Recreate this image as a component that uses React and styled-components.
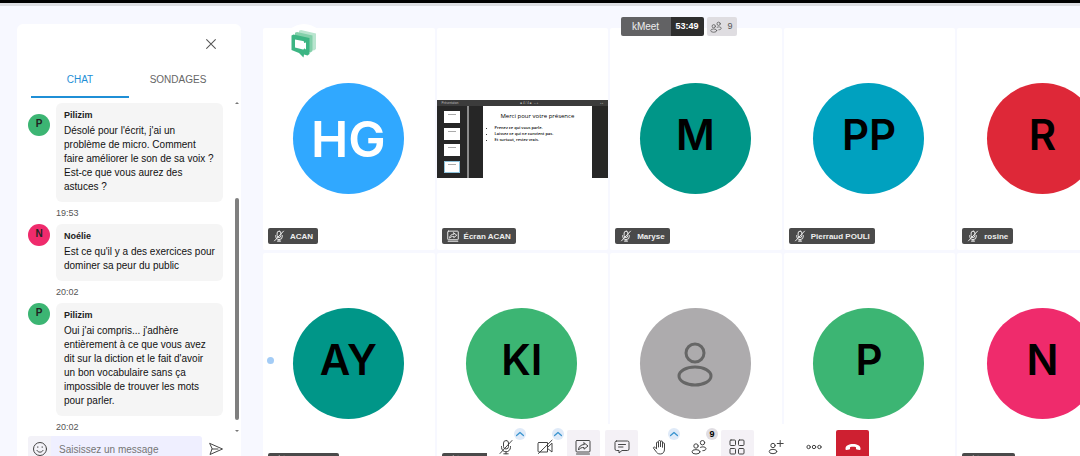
import React, { Component } from 'react';
import styled, { createGlobalStyle } from 'styled-components';

const messages = [
    { initial: 'P', color: '#3cb573', author: 'Pilizim', time: '19:53', text: "Désolé pour l'écrit, j'ai un problème de micro. Comment faire améliorer le son de sa voix ? Est-ce que vous aurez des astuces ?" },
    { initial: 'N', color: '#ef2b6c', author: 'Noélie', time: '20:02', text: "Est ce qu'il y a des exercices pour dominer sa peur du public" },
    { initial: 'P', color: '#3cb573', author: 'Pilizim', time: '20:02', text: "Oui j'ai compris... j'adhère entièrement à ce que vous avez dit sur la diction et le fait d'avoir un bon vocabulaire sans ça impossible de trouver les mots pour parler." }
];

const participants = [
    { initials: 'HG', color: '#30a8ff', name: 'ACAN', host: true },
    { name: 'Écran ACAN', screen: true },
    { initials: 'M', color: '#009688', name: 'Maryse' },
    { initials: 'PP', color: '#00a1bf', name: 'Pierraud POULI' },
    { initials: 'R', color: '#de2838', name: 'rosine' },
    { initials: 'AY', color: '#009688', tagWidth: 71, speaking: true },
    { initials: 'KI', color: '#3cb573', tagWidth: 71 },
    { color: '#adabad', tagWidth: 53 },
    { initials: 'P', color: '#3cb573', tagWidth: 53 },
    { initials: 'N', color: '#ef2b6c', tagWidth: 53 }
];

const Icon = ({ size = 16, width = 1, children }) => (
    <svg width={size} height={size} viewBox="0 0 16 16" fill="none" stroke="currentColor" strokeWidth={width} strokeLinecap="round" strokeLinejoin="round" aria-hidden="true">
        {children}
    </svg>
);

const MicOffIcon = ({ size, width }) => (
    <Icon size={size} width={width}>
        <rect x="5.5" y="1.5" width="5" height="8.5" rx="2.5"/>
        <path d="M3.5 7.5v.8a4.5 4.5 0 0 0 9 0v-.8M8 12.8v2M5.8 14.8h4.4M14 1.5 2 14.5"/>
    </Icon>
);

const CameraOffIcon = () => (
    <Icon>
        <path d="M2 3.5h8.5v9.500H2a1 1 0 0 1-1-1v-7.500a1 1 0 0 1 1-1zM10.500 8.500 15 4.200v8.800l-4-3.200M15 1.200 1.500 14.500"/>
    </Icon>
);

const ShareIcon = ({ size, width }) => (
    <Icon size={size} width={width}>
        <rect x="1" y="1.5" width="14" height="11.5" rx="1"/>
        <path d="M1.5 15h13M9 3.800 13 7 9 10.200V8.500C6.500 8.300 4.800 9.300 3.500 11 3.500 7.600 6 5.600 9 5.500z"/>
    </Icon>
);

const ChatIcon = () => (
    <Icon>
        <path d="M2.500 2h11A1.500 1.500 0 0 1 15 3.500v6.500a1.500 1.500 0 0 1-1.500 1.500H8L5 14v-2.500H2.500A1.500 1.500 0 0 1 1 10V3.500A1.500 1.500 0 0 1 2.500 2zM4.500 5.500h7M4.500 8h4.500"/>
    </Icon>
);

const HandIcon = () => (
    <Icon>
        <path d="M4.500 9.500V4a1 1 0 0 1 2 0v4M6.500 7.500V2.500a1 1 0 0 1 2 0v5M8.500 7.500V3a1 1 0 0 1 2 0v5M10.500 8V4.800a1 1 0 0 1 2 0V10c0 3-1.500 5-4.200 5-2.500 0-3.500-1.200-4.500-2.800L1.500 9.200c-.5-1 .8-1.600 1.600-.8l1.400 1.500"/>
    </Icon>
);

const PeopleIcon = ({ size }) => (
    <Icon size={size}>
        <circle cx="5" cy="7" r="2.200"/>
        <ellipse cx="5" cy="12.800" rx="4" ry="2.200"/>
        <circle cx="11.500" cy="3.700" r="2.200"/>
        <path d="M9.500 8.300c2-1 5.500-.5 5.500 1.400 0 1.200-1.400 2-3.200 2"/>
    </Icon>
);

const GridIcon = () => (
    <Icon>
        <rect x="1" y="1" width="5.500" height="5.500" rx="1"/>
        <rect x="9.500" y="1" width="5.500" height="5.500" rx="1"/>
        <rect x="1" y="9.500" width="5.500" height="5.500" rx="1"/>
        <rect x="9.500" y="9.500" width="5.500" height="5.500" rx="1"/>
    </Icon>
);

const AddPersonIcon = () => (
    <Icon>
        <circle cx="5" cy="6.500" r="2.200"/>
        <ellipse cx="5" cy="12.500" rx="3.800" ry="2.200"/>
        <path d="M12.200 1.500v6M9.200 4.500h6"/>
    </Icon>
);

const MoreIcon = () => (
    <Icon>
        <circle cx="2.600" cy="8" r="1.700"/>
        <circle cx="8" cy="8" r="1.700"/>
        <circle cx="13.400" cy="8" r="1.700"/>
    </Icon>
);

const HangUpIcon = () => (
    <Icon width={0}>
        <path fill="currentColor" d="M.5 9.500C.5 6.500 4 5 8 5s7.500 1.500 7.500 4.500v.7c0 .6-.4.900-1 .8l-2.700-.4c-.5-.1-.8-.4-.8-.9V8.300C9.200 7.700 6.800 7.700 5 8.300v1.400c0 .5-.3.800-.8.900L1.500 11c-.6.1-1-.2-1-.8z"/>
    </Icon>
);

const ChevronIcon = () => (
    <Icon size={10} width={2}><path d="M2.500 10.500 8 5.500l5.500 5"/></Icon>
);

const PersonIcon = () => (
    <svg width="36" height="48" viewBox="0 0 36 48" fill="none" stroke="#666" strokeWidth="3" aria-hidden="true">
        <circle cx="18" cy="13" r="9"/>
        <ellipse cx="18" cy="36" rx="16" ry="9"/>
    </svg>
);

const MeetLogo = () => (
    <svg width="26" height="28" viewBox="0 0 26 28" aria-hidden="true">
        <path fill="#b9e5cf" d="M8 .8 10 0l15 3.500v15.500l-2 1.500L8 17z"/>
        <path fill="#83d0aa" d="M4 2.800 6 2l15.500 3.500V21l-2 1.500L4 19z"/>
        <path fill="#3cb583" d="M.5 5.500 2.500 4.500 18.500 8V24l-2 1.500-3.500-1-.5 3-4.500-4.500L.500 20z"/>
        <path fill="#fff" d="M4 9.500l8 1.600c.6.100 1 .5 1 1v.8l2-.3v7l-2-1.300v.4c0 .5-.4.800-1 .7L4 17.500z"/>
    </svg>
);

const tools = [
    { label: 'Activer le micro', icon: <MicOffIcon/>, arrow: true },
    { label: 'Activer la caméra', icon: <CameraOffIcon/>, arrow: true },
    { label: "Partager l'écran", icon: <ShareIcon/>, active: true },
    { label: 'Chat', icon: <ChatIcon/>, active: true },
    { label: 'Lever la main', icon: <HandIcon/>, arrow: true },
    { label: 'Participants', icon: <PeopleIcon/>, count: 9 },
    { label: 'Mosaïque', icon: <GridIcon/>, active: true },
    { label: 'Inviter', icon: <AddPersonIcon/> },
    { label: 'Plus', icon: <MoreIcon/> },
    { label: 'Raccrocher', icon: <HangUpIcon/>, danger: true }
];

const SharedScreen = () => (
    <StyledScreen>
        <StyledScreenBar><span>Présentation</span><span>■ 4 / 4 ■ &nbsp; – +</span><span>▪ ▪</span></StyledScreenBar>
        <StyledScreenBody>
            <StyledSlideList>
                <StyledSlideThumb/>
                <StyledSlideThumb/>
                <StyledSlideThumb/>
                <StyledSlideThumb $selected/>
            </StyledSlideList>
            <StyledSlide>
                <StyledSlideTitle>Merci pour votre présence</StyledSlideTitle>
                <StyledSlideBullets>
                    <li>Prenez ce qui vous parle.</li>
                    <li>Laissez ce qui ne convient pas.</li>
                    <li>Et surtout, restez vrais.</li>
                </StyledSlideBullets>
            </StyledSlide>
        </StyledScreenBody>
    </StyledScreen>
);

const ChatMessage = ({ message }) => (
    <StyledMessage>
        <StyledSmallAvatar $color={message.color}>{message.initial}</StyledSmallAvatar>
        <StyledMessageContent>
            <StyledBubble>
                <StyledAuthor>{message.author}</StyledAuthor>
                <StyledMessageText>{message.text}</StyledMessageText>
            </StyledBubble>
            <StyledTime>{message.time}</StyledTime>
        </StyledMessageContent>
    </StyledMessage>
);

const ParticipantTile = ({ participant }) => (
    <StyledTile>
        {participant.screen
            ? <SharedScreen/>
            : <StyledAvatar $color={participant.color} $host={participant.host} $empty={!participant.initials}>
                {participant.initials || <PersonIcon/>}
            </StyledAvatar>}
        {participant.speaking && <StyledSpeakingDot/>}
        <StyledNameTag $width={participant.tagWidth}>
            {participant.screen ? <ShareIcon size={12} width={1.3}/> : <MicOffIcon size={12} width={1.3}/>}
            {participant.name}
        </StyledNameTag>
    </StyledTile>
);

class App extends Component {
    state = {
        tab: 'chat',
        draft: ''
    }

    selectTab = (tab) => {
        this.setState({ tab });
    }

    changeDraft = (e) => {
        this.setState({ draft: e.target.value });
    }

    render() {
        return (
            <StyledApp>
                <GlobalStyle/>
                <StyledTopEdge/>
                <StyledLayout>
                    <StyledSidebar>
                        <StyledCloseButton aria-label="Fermer">
                            <Icon size={14} width={1.2}><path d="M3 3l10 10M13 3 3 13"/></Icon>
                        </StyledCloseButton>
                        <StyledTabs>
                            <StyledTab $selected={this.state.tab === 'chat'} onClick={() => this.selectTab('chat')}>CHAT</StyledTab>
                            <StyledTab $selected={this.state.tab === 'polls'} onClick={() => this.selectTab('polls')}>SONDAGES</StyledTab>
                        </StyledTabs>
                        <StyledChatArea>
                            <StyledMessageList>
                                {messages.map((message, i) => <ChatMessage key={i} message={message}/>)}
                            </StyledMessageList>
                            <StyledScrollbar>
                                <StyledScrollArrow/>
                                <StyledScrollThumb/>
                                <StyledScrollArrow $down/>
                            </StyledScrollbar>
                        </StyledChatArea>
                        <StyledComposer>
                            <StyledEmojiButton aria-label="Emoji">
                                <Icon size={16}>
                                    <circle cx="8" cy="8" r="6.500"/>
                                    <path d="M5 9.500c1.200 2.300 4.800 2.300 6 0M5.800 5.800v.6M10.200 5.800v.6"/>
                                </Icon>
                            </StyledEmojiButton>
                            <StyledInput aria-label="Message" placeholder="Saisissez un message" value={this.state.draft} onChange={this.changeDraft}/>
                            <StyledSendButton aria-label="Envoyer">
                                <Icon size={16}><path d="M2 2.500 14.500 8 2 13.500 4 8zM4 8h6"/></Icon>
                            </StyledSendButton>
                        </StyledComposer>
                    </StyledSidebar>
                    <StyledStage>
                        <StyledLogo><MeetLogo/></StyledLogo>
                        <StyledTiles>
                            {participants.map((participant, i) => <ParticipantTile key={i} participant={participant}/>)}
                        </StyledTiles>
                        <StyledHeader>
                            <StyledRoom>kMeet</StyledRoom>
                            <StyledTimer>53:49</StyledTimer>
                            <StyledCount><PeopleIcon size={12}/>9</StyledCount>
                        </StyledHeader>
                        <StyledToolbarRow>
                            <StyledToolbar>
                                {tools.map(tool => (
                                    <StyledToolCell key={tool.label}>
                                        <StyledToolButton aria-label={tool.label} $active={tool.active} $danger={tool.danger}>{tool.icon}</StyledToolButton>
                                        {tool.arrow && <StyledToolArrow aria-label="Options"><ChevronIcon/></StyledToolArrow>}
                                        {tool.count && <StyledToolCount>{tool.count}</StyledToolCount>}
                                    </StyledToolCell>
                                ))}
                            </StyledToolbar>
                        </StyledToolbarRow>
                    </StyledStage>
                </StyledLayout>
            </StyledApp>
        );
    }
}

const GlobalStyle = createGlobalStyle`
    * {
        box-sizing: border-box;
    }

    body {
        margin: 0;
        overflow: hidden;
        background-color: #f7f8ff;
        font-family: "Liberation Sans", Arial, sans-serif;
    }

    button, input {
        border: none;
        padding: 0;
        margin: 0;
        background: none;
        font-family: inherit;
    }

    svg {
        display: block;
        flex-shrink: 0;
    }
`

const StyledApp = styled.div`
    display: flex;
    flex-direction: column;
    height: 100vh;
    overflow: hidden;
`

const StyledTopEdge = styled.div`
    flex-shrink: 0;
    height: 6px;
    background-color: black;
    border-bottom: 3px solid #dcdde2;
`

const StyledLayout = styled.div`
    flex: 1;
    min-height: 0;
    display: flex;
    gap: 22px;
    padding-left: 17px;
`

const StyledSidebar = styled.aside`
    flex: 0 0 224px;
    display: flex;
    flex-direction: column;
    margin-top: 18px;
    background-color: white;
    border-radius: 6px 6px 0 0;
`

const StyledCloseButton = styled.button`
    align-self: flex-end;
    flex-shrink: 0;
    display: flex;
    align-items: center;
    justify-content: center;
    width: 24px;
    height: 24px;
    margin: 8px 18px 6px 0;
    color: #555;
`

const StyledTabs = styled.div`
    flex-shrink: 0;
    display: flex;
    padding: 0 14px;
`

const StyledTab = styled.button`
    flex: 1;
    height: 36px;
    border-bottom: 2px solid ${p=>(p.$selected?'#1f8fd6':'transparent')};
    color: ${p=>(p.$selected?'#1f8fd6':'#666')};
    font-size: 10px;
`

const StyledChatArea = styled.div`
    flex-shrink: 0;
    display: flex;
    justify-content: space-between;
    height: 338px;
    padding: 0 2px 0 11px;
`

const StyledMessageList = styled.div`
    width: 195px;
    padding-top: 5px;
    overflow: hidden;
`

const StyledMessage = styled.div`
    display: flex;
    align-items: flex-start;
    gap: 6px;
`

const StyledSmallAvatar = styled.div`
    position: sticky;
    top: 11px;
    flex-shrink: 0;
    width: 22px;
    height: 22px;
    border-radius: 50%;
    background-color: ${p=>p.$color};
    color: #222;
    font-size: 10px;
    font-weight: bold;
    line-height: 20px;
    text-align: center;
`

const StyledMessageContent = styled.div`
    flex: 1;
`

const StyledBubble = styled.div`
    padding: 6px 6px 8px 8px;
    border-radius: 6px;
    background-color: #f5f5f5;
`

const StyledAuthor = styled.div`
    margin-bottom: 2px;
    font-size: 9px;
    font-weight: bold;
    line-height: 13px;
    color: #222;
`

const StyledMessageText = styled.div`
    font-size: 10px;
    line-height: 14px;
    color: #111;
`

const StyledTime = styled.div`
    font-size: 9px;
    line-height: 22px;
    color: #555;
`

const StyledScrollbar = styled.div`
    display: flex;
    flex-direction: column;
    align-items: center;
    justify-content: space-between;
    width: 5px;
    padding: 2px 0;
`

const StyledScrollArrow = styled.div`
    border: 2px solid transparent;
    border-${p=>(p.$down?'top':'bottom')}-color: #777;
`

const StyledScrollThumb = styled.div`
    width: 4px;
    height: 222px;
    margin-top: 84px;
    border-radius: 2px;
    background-color: #7f7f7f;
`

const StyledComposer = styled.div`
    flex-shrink: 0;
    display: flex;
    height: 26px;
    padding: 0 11px;
`

const StyledEmojiButton = styled.button`
    display: flex;
    align-items: center;
    justify-content: center;
    width: 23px;
    background-color: #f3f2f8;
    border-radius: 3px 0 0 3px;
    color: #444;
`

const StyledInput = styled.input`
    flex: 1;
    min-width: 0;
    padding-left: 8px;
    background-color: #efefff;
    border-radius: 0 3px 3px 0;
    font-size: 10px;

    ::placeholder {
        color: #85858f;
    }
`

const StyledSendButton = styled.button`
    display: flex;
    align-items: center;
    justify-content: center;
    width: 28px;
    color: #444;
`

const StyledStage = styled.main`
    position: relative;
    flex: 1;
    min-width: 0;
    padding-top: 22px;
`

const StyledTiles = styled.div`
    position: relative;
    display: grid;
    grid-template-columns: repeat(5, 21%);
    grid-auto-rows: 222px;
    gap: 3px 2px;
`

const StyledTile = styled.div`
    position: relative;
    display: flex;
    align-items: center;
    justify-content: center;
    background-color: white;
    border-radius: 2px;
`

const StyledAvatar = styled.div`
    display: flex;
    align-items: center;
    justify-content: center;
    width: 111px;
    height: 111px;
    margin: 0 1px 1px 0;
    padding-bottom: ${p=>(p.$host||p.$empty?0:8)}px;
    border-radius: 50%;
    background-color: ${p=>p.$color};
    color: ${p=>(p.$host?'white':'black')};
    font-family: Inter, sans-serif;
    font-size: ${p=>(p.$host?50:42)}px;
    font-weight: 600;
`

const StyledNameTag = styled.div`
    position: absolute;
    left: 5px;
    bottom: 6px;
    display: flex;
    align-items: center;
    gap: 5px;
    width: ${p=>(p.$width?p.$width+'px':'auto')};
    height: 16px;
    padding: 0 5px;
    border-radius: 2px;
    background-color: #4a4a4a;
    color: #eee;
    font-size: 8px;
    font-weight: bold;
    white-space: nowrap;
`

const StyledSpeakingDot = styled.div`
    position: absolute;
    left: 4px;
    top: 104px;
    width: 7px;
    height: 7px;
    border-radius: 50%;
    background-color: #a3ccf6;
`

const StyledLogo = styled.div`
    position: absolute;
    z-index: 1;
    top: 18px;
    left: 21px;
    display: flex;
    align-items: center;
    justify-content: center;
    width: 40px;
    height: 40px;
    border-radius: 50%;
    background-color: white;
`

const StyledHeader = styled.header`
    position: absolute;
    top: 11px;
    left: 14px;
    right: 0;
    display: flex;
    justify-content: center;
    height: 19px;
    font-size: 9px;
    line-height: 19px;
`

const StyledRoom = styled.div`
    width: 50px;
    border-radius: 2px 0 0 2px;
    background-color: #626264;
    color: #eee;
    font-size: 10px;
    text-align: center;
`

const StyledTimer = styled.div`
    width: 33px;
    border-radius: 0 2px 2px 0;
    background-color: #2e2e2e;
    color: white;
    font-weight: bold;
    text-align: center;
`

const StyledCount = styled.div`
    display: flex;
    align-items: center;
    justify-content: center;
    gap: 5px;
    width: 30px;
    margin-left: 3px;
    border-radius: 2px;
    background-color: #dfdde1;
    color: #555;
`

const StyledToolbarRow = styled.div`
    position: absolute;
    left: 16px;
    right: 0;
    bottom: -8px;
    display: flex;
    justify-content: center;
    pointer-events: none;
`

const StyledToolbar = styled.div`
    display: grid;
    grid-template-columns: repeat(10, 1fr);
    width: 385px;
    padding-top: 6px;
    background-color: white;
    pointer-events: auto;
`

const StyledToolCell = styled.div`
    position: relative;
    display: flex;
    justify-content: center;
`

const StyledToolButton = styled.button`
    display: flex;
    align-items: center;
    justify-content: center;
    width: 33px;
    height: 34px;
    border-radius: 2px;
    background-color: ${p=>(p.$danger?'#ce2031':p.$active?'#f4f1f6':'transparent')};
    color: ${p=>(p.$danger?'white':'#444')};
`

const StyledToolArrow = styled.button`
    position: absolute;
    top: -2px;
    right: 0;
    display: flex;
    align-items: center;
    justify-content: center;
    width: 12px;
    height: 12px;
    border-radius: 50%;
    background-color: #dfeaf8;
    color: #3a94cf;
`

const StyledToolCount = styled.span`
    position: absolute;
    top: -2px;
    right: 0;
    width: 12px;
    height: 12px;
    border-radius: 50%;
    background-color: #e0dde2;
    font-size: 9px;
    font-weight: bold;
    line-height: 12px;
    text-align: center;
`

const StyledScreen = styled.div`
    align-self: center;
    width: 100%;
    height: 78px;
    background-color: #262626;
`

const StyledScreenBar = styled.div`
    display: flex;
    justify-content: space-between;
    height: 6px;
    padding: 0 5px;
    background-color: #3b3b3b;
    color: #bbb;
    font-size: 3px;
    line-height: 6px;
`

const StyledScreenBody = styled.div`
    display: flex;
    height: 72px;
`

const StyledSlideList = styled.div`
    display: flex;
    flex-direction: column;
    align-items: center;
    justify-content: space-between;
    width: 32px;
    padding: 5px 0;
    border-right: 2px solid #8a8a8a;
`

const StyledSlideThumb = styled.div`
    width: 16px;
    height: 12px;
    background-color: white;
    border: 1px solid ${p=>(p.$selected?'#8fc4dd':'white')};

    &::before {
        content: '';
        display: block;
        width: 8px;
        height: 1px;
        margin: 2px auto;
        background-color: #aaa;
    }
`

const StyledSlide = styled.div`
    flex: 1;
    margin: 0 16px 0 14px;
    background-color: white;
    color: black;
    font-family: "Open Sans", sans-serif;
`

const StyledSlideTitle = styled.div`
    padding-top: 6px;
    font-size: 6px;
    line-height: 9px;
    text-align: center;
`

const StyledSlideBullets = styled.ul`
    margin: 4px 0 0;
    padding-left: 12px;
    font-size: 4px;
    font-weight: 600;
    line-height: 6px;
    white-space: nowrap;
`

export default App;
